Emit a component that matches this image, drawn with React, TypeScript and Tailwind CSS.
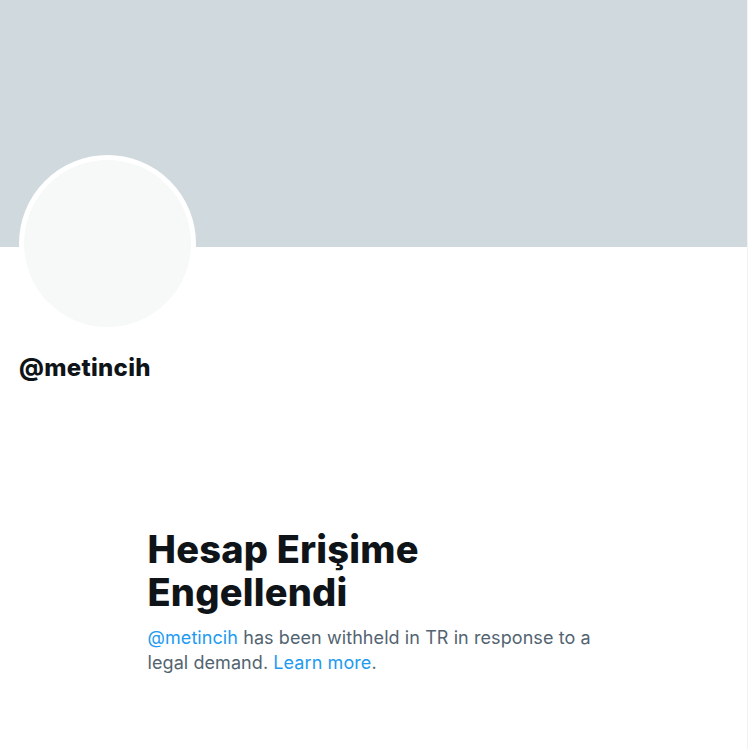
import React from 'react';

const font = { fontFamily: 'Inter, "Liberation Sans", sans-serif' };

export default function App() {
    return (
        <div className="w-[748px] min-h-[749px] bg-white border-r border-[#EFF3F4]" style={font}>
            {/* Banner */}
            <div className="h-[247px] bg-[#CFD9DE]" />

            {/* Avatar + handle */}
            <div className="px-[19px]">
                <div className="-mt-[92px] w-[177px] h-[177px] rounded-full border-[5px] border-white bg-[#F7F9F9]" />
                <div className="mt-[21px] text-[24px] leading-[29px] font-extrabold text-[#0F1419] tracking-[0.3px]">
                    @metincih
                </div>
            </div>

            {/* Withheld notice */}
            <div className="w-[452px] mx-auto mt-[146px]">
                <h1 className="text-[38px] leading-[43px] font-extrabold text-[#0F1419] tracking-[0.2px]">
                    Hesap Erişime Engellendi
                </h1>
                <p className="mt-[11px] text-[18px] leading-[25px] text-[#536471] tracking-[0.08px]">
                    <span className="text-[#1D9BF0]">@metincih</span> has been withheld in TR in response to a legal demand.{' '}
                    <span className="text-[#1D9BF0]">Learn more</span>.
                </p>
            </div>
        </div>
    );
}
